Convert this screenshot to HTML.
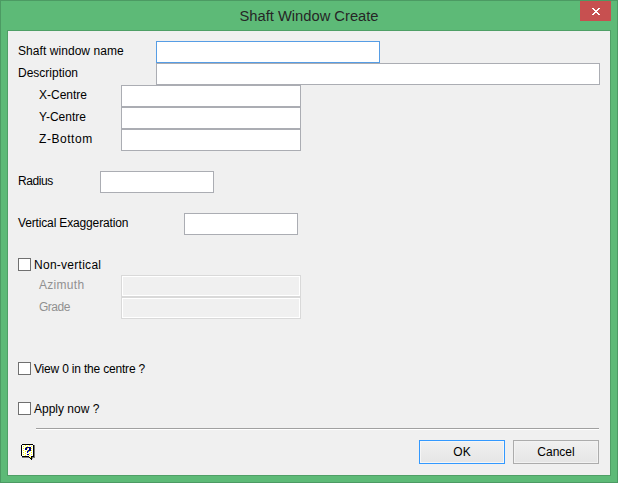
<!DOCTYPE html>
<html><head><meta charset="utf-8"><style>
html,body{margin:0;padding:0;}
body{width:618px;height:483px;position:relative;overflow:hidden;background:#5dba77;font-family:"Liberation Sans",sans-serif;font-size:12px;color:#000;}
.a{position:absolute;}
#frame{left:0;top:0;width:616px;height:481px;border:1px solid #4c9a63;}
#title{left:0;top:7px;width:618px;text-align:center;font-size:15.5px;color:#262626;line-height:18px;transform:scaleX(0.95);}
#close{left:580px;top:1px;width:31px;height:20px;background:#c75050;}
#client{left:7px;top:30px;width:602px;height:444px;border:1px solid #4f9f66;background:#f0f0f0;}
.lbl{position:absolute;white-space:nowrap;line-height:14px;}
.dis{color:#909090;}
.ed{position:absolute;box-sizing:border-box;height:22px;background:#fff;border:1px solid #abadb3;}
.ed.f{border-color:#569de5;}
.ed.d{background:#f0f0f0;border:1px solid #d9d9d9;box-shadow:inset 1px 1px 0 #fff,inset -1px -1px 0 #fff;}
.cb{position:absolute;box-sizing:border-box;width:13px;height:13px;border:1px solid #707070;background:#fff;left:18px;}
.btn{position:absolute;box-sizing:border-box;top:440px;width:86px;height:24px;border:1px solid #acacac;background:linear-gradient(#f0f0f0,#e5e5e5);box-shadow:inset 0 0 0 1px #f2f2f2;text-align:center;line-height:22px;padding-top:0;}
.btn.def{border-color:#3399ff;box-shadow:inset 0 0 0 1px #f6f6f6;}
#sep{left:36px;top:428px;width:563px;height:1px;background:#a0a0a0;border-bottom:1px solid #fff;}
</style></head><body>
<div class="a" id="frame"></div>
<div class="a" id="title">Shaft Window Create</div>
<div class="a" id="close"><svg width="31" height="20" style="position:absolute;left:0;top:0" fill="#fff" shape-rendering="crispEdges"><rect x="12" y="7" width="1" height="1"/><rect x="13" y="7" width="1" height="1"/><rect x="18" y="7" width="1" height="1"/><rect x="19" y="7" width="1" height="1"/><rect x="13" y="8" width="1" height="1"/><rect x="14" y="8" width="1" height="1"/><rect x="17" y="8" width="1" height="1"/><rect x="18" y="8" width="1" height="1"/><rect x="14" y="9" width="1" height="1"/><rect x="15" y="9" width="1" height="1"/><rect x="16" y="9" width="1" height="1"/><rect x="17" y="9" width="1" height="1"/><rect x="15" y="10" width="1" height="1"/><rect x="16" y="10" width="1" height="1"/><rect x="14" y="11" width="1" height="1"/><rect x="15" y="11" width="1" height="1"/><rect x="16" y="11" width="1" height="1"/><rect x="17" y="11" width="1" height="1"/><rect x="13" y="12" width="1" height="1"/><rect x="14" y="12" width="1" height="1"/><rect x="17" y="12" width="1" height="1"/><rect x="18" y="12" width="1" height="1"/><rect x="12" y="13" width="1" height="1"/><rect x="13" y="13" width="1" height="1"/><rect x="18" y="13" width="1" height="1"/><rect x="19" y="13" width="1" height="1"/></svg></div>
<div class="a" id="client"></div>

<div class="lbl" style="letter-spacing:0.06px;left:18px;top:44px">Shaft window name</div>
<div class="ed f" style="left:156px;top:41px;width:224px"></div>
<div class="lbl" style="left:18px;top:66px">Description</div>
<div class="ed" style="left:156px;top:63px;width:444px"></div>

<div class="lbl" style="left:39px;top:88px">X-Centre</div>
<div class="ed" style="left:121px;top:85px;width:180px"></div>
<div class="lbl" style="left:39px;top:110px">Y-Centre</div>
<div class="ed" style="left:121px;top:107px;width:180px"></div>
<div class="lbl" style="letter-spacing:0.55px;left:39px;top:132px">Z-Bottom</div>
<div class="ed" style="left:121px;top:129px;width:180px"></div>

<div class="lbl" style="letter-spacing:-0.4px;left:18px;top:174px">Radius</div>
<div class="ed" style="left:100px;top:171px;width:114px"></div>

<div class="lbl" style="letter-spacing:-0.15px;left:18px;top:216px">Vertical Exaggeration</div>
<div class="ed" style="left:184px;top:213px;width:114px"></div>

<div class="cb" style="top:258px"></div>
<div class="lbl" style="letter-spacing:0.27px;left:34px;top:258px">Non-vertical</div>
<div class="lbl dis" style="letter-spacing:0.3px;left:39px;top:278px">Azimuth</div>
<div class="ed d" style="left:121px;top:275px;width:180px"></div>
<div class="lbl dis" style="letter-spacing:-0.5px;left:39px;top:300px">Grade</div>
<div class="ed d" style="left:121px;top:297px;width:180px"></div>

<div class="cb" style="top:362px"></div>
<div class="lbl" style="letter-spacing:-0.19px;left:34px;top:362px">View 0 in the centre ?</div>
<div class="cb" style="top:402px"></div>
<div class="lbl" style="left:34px;top:402px">Apply now ?</div>

<div class="a" id="sep"></div>
<svg class="a" style="left:21px;top:444px" width="15" height="17" shape-rendering="crispEdges"><rect x="1" y="0" width="11" height="1" fill="#000"/><rect x="0" y="1" width="1" height="1" fill="#000"/><rect x="1" y="1" width="3" height="1" fill="#fff"/><rect x="4" y="1" width="1" height="1" fill="#ffff00"/><rect x="5" y="1" width="3" height="1" fill="#fff"/><rect x="8" y="1" width="1" height="1" fill="#ffff00"/><rect x="9" y="1" width="3" height="1" fill="#fff"/><rect x="12" y="1" width="1" height="1" fill="#000"/><rect x="13" y="1" width="1" height="1" fill="#7a7a7a"/><rect x="0" y="2" width="1" height="1" fill="#000"/><rect x="1" y="2" width="1" height="1" fill="#fff"/><rect x="2" y="2" width="1" height="1" fill="#ffff00"/><rect x="3" y="2" width="3" height="1" fill="#fff"/><rect x="6" y="2" width="1" height="1" fill="#ffff00"/><rect x="7" y="2" width="3" height="1" fill="#fff"/><rect x="10" y="2" width="1" height="1" fill="#ffff00"/><rect x="11" y="2" width="1" height="1" fill="#fff"/><rect x="12" y="2" width="1" height="1" fill="#000"/><rect x="13" y="2" width="1" height="1" fill="#7a7a7a"/><rect x="0" y="3" width="1" height="1" fill="#000"/><rect x="1" y="3" width="3" height="1" fill="#fff"/><rect x="4" y="3" width="1" height="1" fill="#ffff00"/><rect x="5" y="3" width="5" height="1" fill="#000080"/><rect x="10" y="3" width="2" height="1" fill="#fff"/><rect x="12" y="3" width="1" height="1" fill="#000"/><rect x="13" y="3" width="1" height="1" fill="#7a7a7a"/><rect x="0" y="4" width="1" height="1" fill="#000"/><rect x="1" y="4" width="1" height="1" fill="#fff"/><rect x="2" y="4" width="1" height="1" fill="#ffff00"/><rect x="3" y="4" width="1" height="1" fill="#fff"/><rect x="4" y="4" width="2" height="1" fill="#000080"/><rect x="6" y="4" width="1" height="1" fill="#ffff00"/><rect x="7" y="4" width="1" height="1" fill="#fff"/><rect x="8" y="4" width="2" height="1" fill="#000080"/><rect x="10" y="4" width="1" height="1" fill="#ffff00"/><rect x="11" y="4" width="1" height="1" fill="#fff"/><rect x="12" y="4" width="1" height="1" fill="#000"/><rect x="13" y="4" width="1" height="1" fill="#7a7a7a"/><rect x="0" y="5" width="1" height="1" fill="#000"/><rect x="1" y="5" width="3" height="1" fill="#fff"/><rect x="4" y="5" width="2" height="1" fill="#000080"/><rect x="6" y="5" width="2" height="1" fill="#fff"/><rect x="8" y="5" width="2" height="1" fill="#000080"/><rect x="10" y="5" width="2" height="1" fill="#fff"/><rect x="12" y="5" width="1" height="1" fill="#000"/><rect x="13" y="5" width="1" height="1" fill="#7a7a7a"/><rect x="0" y="6" width="1" height="1" fill="#000"/><rect x="1" y="6" width="1" height="1" fill="#fff"/><rect x="2" y="6" width="1" height="1" fill="#ffff00"/><rect x="3" y="6" width="3" height="1" fill="#fff"/><rect x="6" y="6" width="1" height="1" fill="#ffff00"/><rect x="7" y="6" width="3" height="1" fill="#000080"/><rect x="10" y="6" width="1" height="1" fill="#ffff00"/><rect x="11" y="6" width="1" height="1" fill="#fff"/><rect x="12" y="6" width="1" height="1" fill="#000"/><rect x="13" y="6" width="1" height="1" fill="#7a7a7a"/><rect x="0" y="7" width="1" height="1" fill="#000"/><rect x="1" y="7" width="3" height="1" fill="#fff"/><rect x="4" y="7" width="1" height="1" fill="#ffff00"/><rect x="5" y="7" width="1" height="1" fill="#fff"/><rect x="6" y="7" width="1" height="1" fill="#000080"/><rect x="7" y="7" width="1" height="1" fill="#2040ff"/><rect x="8" y="7" width="1" height="1" fill="#ffff00"/><rect x="9" y="7" width="3" height="1" fill="#fff"/><rect x="12" y="7" width="1" height="1" fill="#000"/><rect x="13" y="7" width="1" height="1" fill="#7a7a7a"/><rect x="0" y="8" width="1" height="1" fill="#000"/><rect x="1" y="8" width="1" height="1" fill="#fff"/><rect x="2" y="8" width="1" height="1" fill="#ffff00"/><rect x="3" y="8" width="3" height="1" fill="#fff"/><rect x="6" y="8" width="1" height="1" fill="#000080"/><rect x="7" y="8" width="3" height="1" fill="#fff"/><rect x="10" y="8" width="1" height="1" fill="#ffff00"/><rect x="11" y="8" width="1" height="1" fill="#fff"/><rect x="12" y="8" width="1" height="1" fill="#000"/><rect x="13" y="8" width="1" height="1" fill="#7a7a7a"/><rect x="0" y="9" width="1" height="1" fill="#000"/><rect x="1" y="9" width="3" height="1" fill="#fff"/><rect x="4" y="9" width="1" height="1" fill="#ffff00"/><rect x="5" y="9" width="3" height="1" fill="#fff"/><rect x="8" y="9" width="1" height="1" fill="#ffff00"/><rect x="9" y="9" width="3" height="1" fill="#fff"/><rect x="12" y="9" width="1" height="1" fill="#000"/><rect x="13" y="9" width="1" height="1" fill="#7a7a7a"/><rect x="0" y="10" width="1" height="1" fill="#000"/><rect x="1" y="10" width="1" height="1" fill="#fff"/><rect x="2" y="10" width="1" height="1" fill="#ffff00"/><rect x="3" y="10" width="3" height="1" fill="#fff"/><rect x="6" y="10" width="2" height="1" fill="#000080"/><rect x="8" y="10" width="2" height="1" fill="#fff"/><rect x="10" y="10" width="1" height="1" fill="#ffff00"/><rect x="11" y="10" width="1" height="1" fill="#fff"/><rect x="12" y="10" width="1" height="1" fill="#000"/><rect x="13" y="10" width="1" height="1" fill="#7a7a7a"/><rect x="0" y="11" width="1" height="1" fill="#000"/><rect x="1" y="11" width="3" height="1" fill="#fff"/><rect x="4" y="11" width="1" height="1" fill="#ffff00"/><rect x="5" y="11" width="3" height="1" fill="#fff"/><rect x="8" y="11" width="1" height="1" fill="#ffff00"/><rect x="9" y="11" width="3" height="1" fill="#fff"/><rect x="12" y="11" width="1" height="1" fill="#000"/><rect x="13" y="11" width="1" height="1" fill="#7a7a7a"/><rect x="1" y="12" width="7" height="1" fill="#000"/><rect x="8" y="12" width="2" height="1" fill="#fff"/><rect x="10" y="12" width="3" height="1" fill="#000"/><rect x="13" y="12" width="1" height="1" fill="#7a7a7a"/><rect x="1" y="13" width="7" height="1" fill="#7a7a7a"/><rect x="8" y="13" width="1" height="1" fill="#000"/><rect x="9" y="13" width="1" height="1" fill="#ffff00"/><rect x="10" y="13" width="1" height="1" fill="#000"/><rect x="11" y="13" width="3" height="1" fill="#7a7a7a"/><rect x="9" y="14" width="2" height="1" fill="#000"/><rect x="11" y="14" width="1" height="1" fill="#9a9a9a"/><rect x="10" y="15" width="1" height="1" fill="#000"/></svg>
<div class="btn def" style="left:419px">OK</div>
<div class="btn" style="left:513px">Cancel</div>
</body></html>
